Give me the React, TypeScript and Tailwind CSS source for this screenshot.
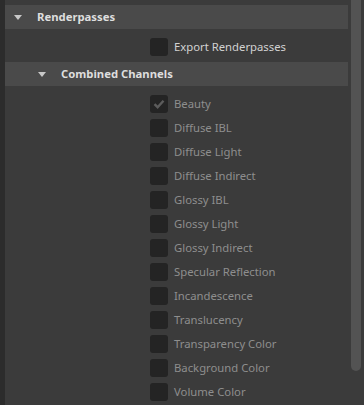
import React from "react";

const channels = [
  "Beauty",
  "Diffuse IBL",
  "Diffuse Light",
  "Diffuse Indirect",
  "Glossy IBL",
  "Glossy Light",
  "Glossy Indirect",
  "Specular Reflection",
  "Incandescence",
  "Translucency",
  "Transparency Color",
  "Background Color",
  "Volume Color",
];

function Tri() {
  return (
    <svg width="8" height="5" viewBox="0 0 8 5" className="shrink-0">
      <path d="M0 0 L8 0 L4 5 Z" fill="#c8c8c8" />
    </svg>
  );
}

function Box({ checked }: { checked?: boolean }) {
  return (
    <div className="w-[18px] h-[18px] rounded-[3px] bg-[#242424] flex items-center justify-center shrink-0">
      {checked && (
        <svg width="12" height="10" viewBox="0 0 12 10">
          <path d="M1.5 5.2 L4.6 8.2 L10.5 1.8" stroke="#5c5c5c" strokeWidth="2.4" fill="none" />
        </svg>
      )}
    </div>
  );
}

export default function App() {
  return (
    <div
      className="w-[364px] h-[405px] bg-[#3b3b3b] flex overflow-hidden text-[11.3px]"
      style={{ fontFamily: '"Noto Sans", "Open Sans", sans-serif' }}
    >
      <div className="w-[5px] bg-[#2c2c2c] shrink-0" />
      <div className="w-[343px] pt-[5px] flex flex-col">
        <div className="h-[24px] bg-[#4a4a4a] flex items-center pl-[9px]">
          <Tri />
          <span className="ml-[15px] pt-px font-bold text-[#dedede]">Renderpasses</span>
        </div>
        <div className="pt-[6px] pb-[3px]">
          <div className="h-[24px] flex items-center pl-[145px]">
            <Box />
            <span className="ml-[6px] pt-px text-[#d2d2d2]">Export Renderpasses</span>
          </div>
        </div>
        <div className="h-[24px] bg-[#4a4a4a] flex items-center pl-[33px]">
          <Tri />
          <span className="ml-[15px] pt-px font-bold text-[#dedede]">Combined Channels</span>
        </div>
        <div className="pt-[6px] flex flex-col">
          {channels.map((c, i) => (
            <div key={c} className="h-[24px] flex items-center pl-[145px]">
              <Box checked={i === 0} />
              <span className="ml-[6px] pt-px text-[#8e8e8e]">{c}</span>
            </div>
          ))}
        </div>
      </div>
      <div className="w-[16px] shrink-0 pl-[3px]">
        <div className="w-[10px] h-[371px] bg-[#535353] rounded-b-[5px]" />
      </div>
    </div>
  );
}
